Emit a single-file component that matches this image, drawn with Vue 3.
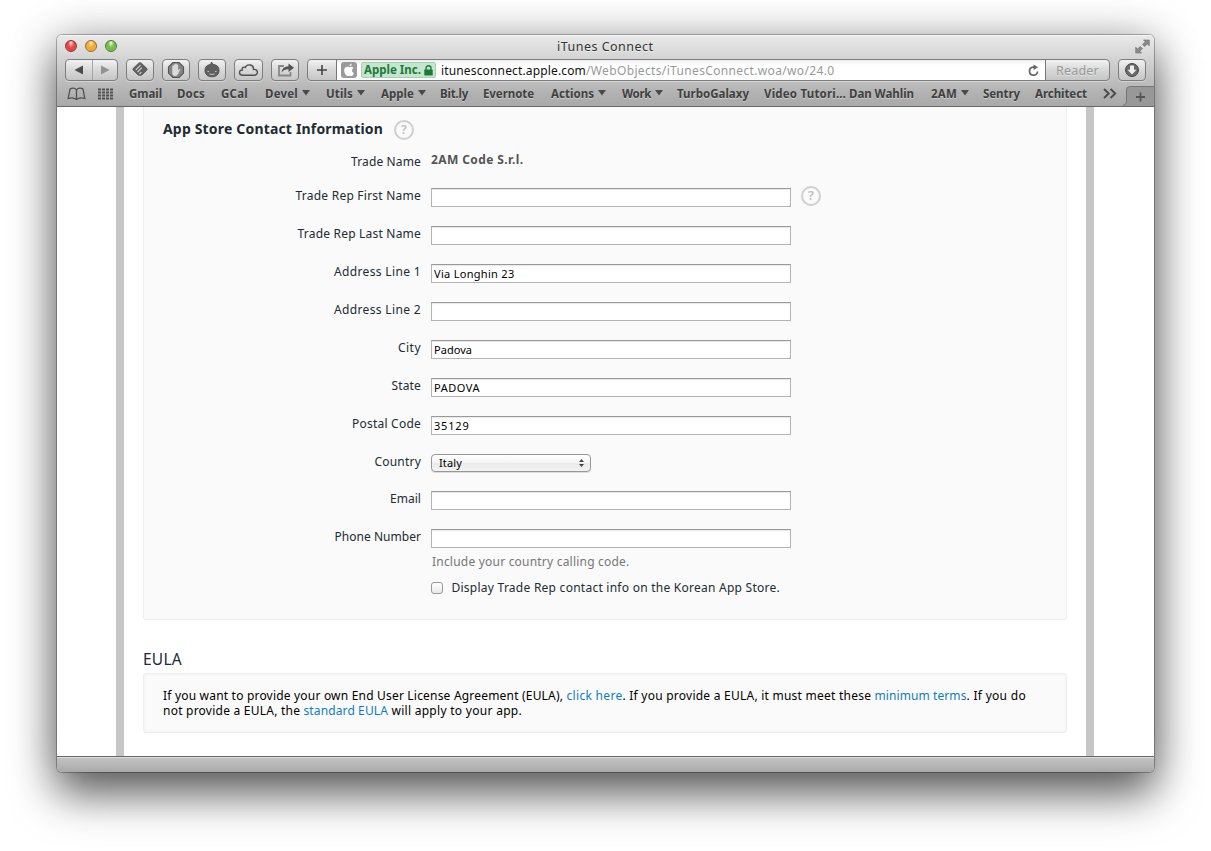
<script setup>
const vFit = {
  mounted(el, { value }) {
    const apply = () => {
      el.style.letterSpacing = '0px'
      const natural = el.getBoundingClientRect().width
      el.style.letterSpacing = (value - natural) / el.textContent.length + 'px'
    }
    apply()
    document.fonts.ready.then(apply)
  },
}

const bookmarks = [
  { name: 'Gmail', width: 33, slot: 48 },
  { name: 'Docs', width: 28, slot: 44 },
  { name: 'GCal', width: 27, slot: 44 },
  { name: 'Devel', width: 33, slot: 61, menu: true },
  { name: 'Utils', width: 27, slot: 55, menu: true },
  { name: 'Apple', width: 33, slot: 59, menu: true },
  { name: 'Bit.ly', width: 28, slot: 43 },
  { name: 'Evernote', width: 51, slot: 68 },
  { name: 'Actions', width: 43, slot: 71, menu: true },
  { name: 'Work', width: 29, slot: 55, menu: true },
  { name: 'TurboGalaxy', width: 72, slot: 87 },
  { name: 'Video Tutori…', width: 82, slot: 85 },
  { name: 'Dan Wahlin', width: 65, slot: 82 },
  { name: '2AM', width: 26, slot: 52, menu: true },
  { name: 'Sentry', width: 37, slot: 52 },
  { name: 'Architect', width: 52, slot: 68 },
]

const fields = [
  { label: 'Trade Rep First Name', width: 125.5, help: true },
  { label: 'Trade Rep Last Name', width: 123.5 },
  { label: 'Address Line 1', width: 87, value: 'Via Longhin 23', valueWidth: 80.5 },
  { label: 'Address Line 2', width: 87 },
  { label: 'City', width: 23, value: 'Padova', valueWidth: 38 },
  { label: 'State', width: 29.5, value: 'PADOVA', valueWidth: 46 },
  { label: 'Postal Code', width: 69, value: '35129', valueWidth: 35.5 },
  { label: 'Country', width: 46.5, select: 'Italy', valueWidth: 23 },
  { label: 'Email', width: 31 },
  { label: 'Phone Number', width: 86.5 },
]
</script>

<template>
  <div class="desktop">
    <div class="window">
      <header class="chrome">
        <div class="titlebar">
          <div class="lights"><i class="red"></i><i class="amber"></i><i class="green"></i></div>
          <h1><span v-fit="96.500">iTunes Connect</span></h1>
          <svg class="fullscreen" width="15" height="15" viewBox="0 0 15 15" fill="#8a8a8a" stroke="#6c6c6c" stroke-width=".6">
            <path d="M8.500 1h5.800v5.800l-1.900-1.900-2.700 2.700-2.200-2.200 2.700-2.700zM6.500 14H.7V8.200l1.900 1.900 2.700-2.700 2.200 2.200-2.700 2.700z" />
          </svg>
        </div>

        <div class="toolbar">
          <div class="btn nav">
            <svg width="52" height="20" viewBox="0 0 52 20">
              <path d="M17 5.500v9L8.500 10z" fill="#4c4c4c" />
              <path d="M26.500 0v20" stroke="#a5a5a5" />
              <path d="M35 5.500v9l8.500-4.500z" fill="#929292" />
            </svg>
          </div>
          <div class="btn">
            <svg width="26" height="20" viewBox="0 0 26 20">
              <path d="M13 2.700q.9 0 1.600.7l5.100 4.900q.9.900 0 1.900l-4.300 4.400q-.7.700-1.500.7h-1.800q-.8 0-1.500-.7l-4.300-4.400q-.9-1 0-1.900l5.100-4.900q.7-.7 1.600-.7z" fill="#626262" stroke="#4c4c4c" stroke-width=".8" />
              <path d="M8.800 9.800l4.700-4.700M10.500 12l4.300-4.300M12.500 14l1.800-1.800" stroke="#cfcfcf" stroke-width="1.200" />
            </svg>
          </div>
          <div class="btn">
            <svg width="26" height="20" viewBox="0 0 26 20">
              <path d="M9.900 2.500h6.200L20.500 6.900v6.200L16.100 17.500H9.900L5.500 13.100V6.900z" fill="#858585" stroke="#555" stroke-width="1.200" />
              <path d="M9.300 10V6q.7-.9 1.400 0V4.800q.8-1 1.500 0V4q.8-.9 1.500 0v.8q.8-.8 1.400 0V10.500l1-1.300q1-.6 1.200.4L15 14q-.9 1.900-2.800 1.900-2.900 0-2.900-3z" fill="#dadada" />
            </svg>
          </div>
          <div class="btn">
            <svg width="26" height="20" viewBox="0 0 26 20">
              <path d="M12.500 2q.6 1.800 2.300 2.600c3.300.4 5.200 2.400 5.200 5.400 0 .8-.1 1.300 0 2-1 3.400-3.500 4.800-7 4.800S7 15.400 6 12c.1-.7 0-1.200 0-2 0-3 1.800-4.900 5-5.400q1.200-1 1.500-2.600z" fill="#606060" stroke="#484848" stroke-width=".8" />
              <path d="M8.500 11.500H10M16 11.500h1.500M10.500 14q2.500 1 5 0" stroke="#c4c4c4" fill="none" />
            </svg>
          </div>
          <div class="btn cloud">
            <svg width="27" height="20" viewBox="0 0 27 20">
              <path d="M8 15.300C3.300 15.300 3.700 10 7.200 10 6.700 7.300 9 6.600 10.300 7.500c1.900-4.200 8.600-3 8.200 1.900 5.200-.5 5.200 5.900.5 5.900z" fill="none" stroke="#505050" stroke-width="1.400" />
            </svg>
          </div>
          <div class="btn">
            <svg width="26" height="20" viewBox="0 0 26 20">
              <path d="M12 6H7v9.500h11.500V12" fill="none" stroke="#888" stroke-width="1.800" />
              <path d="M9.500 12.500q.5-6 7-6.300V3.500L22 7.700l-5.500 4.200V9.200q-4-.3-7 3.300z" fill="#555" />
            </svg>
          </div>
          <div class="address">
            <div class="add">
              <svg width="29" height="20" viewBox="0 0 29 20"><path d="M9 10h10M14 5v10" stroke="#444" stroke-width="1.600" /></svg>
            </div>
            <div class="url">
              <svg class="favicon" width="16" height="16" viewBox="0 0 16 16">
                <rect width="16" height="16" rx="3" fill="#9a9a9a" />
                <path d="M10.800 1.500q.2 2.200-2.400 3 0-2.300 2.400-3zM8.300 5.200c1-.6 3-1 4.200.7-2.300 1.500-1.600 4.300.5 5-.9 2.200-1.900 3.600-3.200 3.100-1.100-.5-1.500-.4-2.400 0C5.500 14.600 3 11 3.200 8 3.400 5 6 4 8.300 5.200z" fill="#fff" />
              </svg>
              <div class="badge">
                <b v-fit="57">Apple Inc.</b>
                <svg width="9" height="11" viewBox="0 0 9 11"><path d="M2 5V3.300a2.500 2.500 0 0 1 5 0V5" fill="none" stroke="#1c7a3d" stroke-width="1.400" /><rect x=".3" y="4.600" width="8.400" height="6" rx=".7" fill="#1c7a3d" /></svg>
              </div>
              <span v-fit="145" class="host">itunesconnect.apple.com</span>
              <span v-fit="248.500" class="path">/WebObjects/iTunesConnect.woa/wo/24.0</span>
              <svg class="reload" width="13" height="13" viewBox="0 0 13 13"><path d="M8 3.200H6A4 4 0 1 0 10.500 7.500" fill="none" stroke="#666" stroke-width="1.700" /><path d="M6.500.5l4.600 2.700-4.600 2.900z" fill="#666" /></svg>
            </div>
            <div class="reader"><span v-fit="43">Reader</span></div>
          </div>
          <div class="btn download">
            <svg width="26" height="20" viewBox="0 0 26 20"><circle cx="13" cy="10" r="6.500" fill="#6a6a6a" stroke="#484848" /><path d="M11 5.500h4V9.800h2.500L13 14.500 8.500 9.800H11z" fill="#eee" /></svg>
          </div>
        </div>

        <nav class="bookmarks">
          <svg class="book" width="19" height="14" viewBox="0 0 19 14"><path d="M9.500 12.500V3Q8.500 1.200 6 1.200q-2 0-3 .8L1.200 11.500Q6 9.800 9.500 12.500q3.500-2.700 8.300-1L16 2q-1-.8-3-.8-2.500 0-3.500 1.800" fill="none" stroke="#505050" stroke-width="1.300" /></svg>
          <svg class="sites" width="15" height="12" viewBox="0 0 15 12"><path d="M0 1.500h15M0 4.500h15M0 7.500h15M0 10.500h15" stroke="#505050" stroke-width="2" stroke-dasharray="3 1" /></svg>
          <div v-for="item in bookmarks" :key="item.name" class="bookmark" :style="{ width: item.slot + 'px' }">
            <b v-fit="item.width">{{ item.name }}</b>
            <svg v-if="item.menu" width="8" height="6" viewBox="0 0 8 6"><path d="M0 0h8L4 5.600z" fill="#4a4a4a" /></svg>
          </div>
          <svg class="more" width="14" height="12" viewBox="0 0 14 12"><path d="M1 1l4.700 4.500L1 10M7.500 1l4.700 4.500L7.500 10" fill="none" stroke="#4c4c4c" stroke-width="2" /></svg>
          <svg class="newtab" width="31" height="20" viewBox="0 0 31 20"><path d="M0 20Q3.500 19 3.500 15V4Q3.500.5 7 .5H31V20z" fill="#989898" /><path d="M0 19.500Q3.500 19 3.500 15V4Q3.500.5 7 .5H31" fill="none" stroke="#777" /><path d="M13 11h9M17.500 6.500v9" stroke="#555" stroke-width="1.800" /></svg>
        </nav>
      </header>

      <main class="viewport">
        <div class="sheet">
          <section class="card contact">
            <h2><span v-fit="220">App Store Contact Information</span><span class="help">?</span></h2>
            <div class="row trade">
              <label><span v-fit="70">Trade Name</span></label>
              <b v-fit="92.500">2AM Code S.r.l.</b>
            </div>
            <div v-for="field in fields" :key="field.label" class="row" :class="{ country: field.select }">
              <label><span v-fit="field.width">{{ field.label }}</span></label>
              <div v-if="field.select" class="select">
                <span v-fit="field.valueWidth">{{ field.select }}</span>
                <svg width="5" height="8" viewBox="0 0 5 8" fill="#444"><path d="M0 3l2.500-3L5 3zM0 5l2.500 3L5 5z" /></svg>
              </div>
              <div v-else class="input"><span v-if="field.value" v-fit="field.valueWidth">{{ field.value }}</span></div>
              <span v-if="field.help" class="help">?</span>
            </div>
            <p class="hint"><span v-fit="197.500">Include your country calling code.</span></p>
            <div class="check"><i></i><span v-fit="328.500">Display Trade Rep contact info on the Korean App Store.</span></div>
          </section>

          <h3><span v-fit="39">EULA</span></h3>
          <section class="card eula">
            <p><span v-fit="403.500">If you want to provide your own End User License Agreement (EULA),&nbsp;</span><a v-fit="56">click here</a><span v-fit="252">. If you provide a EULA, it must meet these&nbsp;</span><a v-fit="92">minimum terms</a><span v-fit="59.500">. If you do</span></p>
            <p><span v-fit="140.500">not provide a EULA, the&nbsp;</span><a v-fit="84.500">standard EULA</a><span v-fit="134">&nbsp;will apply to your app.</span></p>
          </section>
        </div>
      </main>
      <footer class="status"></footer>
    </div>
  </div>
</template>

<style>
body { background: #fff; overflow: hidden; }
</style>

<style scoped>
* { box-sizing: border-box; }
.desktop {
  width: 1211px;
  height: 851px;
  padding: 35px 57px 0;
  font-family: "Noto Sans", "Open Sans", sans-serif;
  font-size: 12px;
  color: #222b33;
  overflow: hidden;
}
span, b, a { white-space: pre; }
svg { display: block; flex: none; }
.window {
  width: 1097px;
  height: 737px;
  display: flex;
  flex-direction: column;
  border-radius: 5px;
  overflow: hidden;
  background: #fff;
  box-shadow: 0 0 0 1px rgba(0, 0, 0, .27), 0 23px 44px rgba(0, 0, 0, .56), 0 2px 46px rgba(0, 0, 0, .28);
}
.chrome {
  height: 72px;
  flex: none;
  background: linear-gradient(#eaeaea 0, #d9d9d9 18px, #c2c2c2 42px, #b0b0b0 60px, #a9a9a9);
  border-bottom: 1px solid #686868;
  box-shadow: inset 0 1px #f6f6f6;
}
.titlebar { height: 24px; position: relative; display: flex; align-items: center; padding-left: 8px; }
.lights { display: flex; gap: 8px; }
.lights i { width: 12px; height: 12px; border-radius: 50%; border: 1px solid; margin-top: -2px; }
.red { background: radial-gradient(ellipse at 50% 20%, #ffdcdc 0, #ee5858 35%, #e33b3b 60%, #ff9c92); border-color: #8c3030 !important; }
.amber { background: radial-gradient(ellipse at 50% 20%, #fff1cf 0, #f0b23e 35%, #eea72d 60%, #ffe78a); border-color: #986325 !important; }
.green { background: radial-gradient(ellipse at 50% 20%, #edffdc 0, #85c65b 35%, #70b548 60%, #c5f793); border-color: #467630 !important; }
.titlebar h1 { position: absolute; left: 500px; top: 3px; margin: 0; font-size: 12.5px; font-weight: 400; line-height: 18px; color: #333; text-shadow: 0 1px #eee; }
.fullscreen { margin: -2px 4px 0 auto; }
.toolbar { display: flex; padding-left: 8px; gap: 8px; height: 22px; }
.btn, .address {
  height: 22px;
  border: 1px solid #7d7d7d;
  border-radius: 4px;
  background: linear-gradient(#f2f2f2, #d8d8d8 50%, #c6c6c6);
  box-shadow: 0 1px rgba(255, 255, 255, .35);
  flex: none;
}
.btn { width: 28px; }
.nav { width: 53px; }
.cloud { width: 29px; }
.address { width: 803px; display: flex; overflow: hidden; }
.add { width: 29px; border-right: 1px solid #777; }
.url { width: 709px; background: linear-gradient(#eee, #fff 5px); display: flex; align-items: center; padding-left: 4px; border-right: 1px solid #777; line-height: 18px; }
.badge { width: 75px; height: 16px; margin-left: 4px; border: 1px solid #a4d2b0; border-radius: 2px; background: #c5e5cd; color: #1c7a3d; display: flex; align-items: center; padding-left: 2px; gap: 3px; font-size: 11.5px; }
.host { margin: 2px 0 0 5px; color: #111; }
.path { margin-top: 2px; color: #999; }
.reload { margin: 0 5px 0 auto; }
.reader { flex: 1; color: #999; font-size: 12.5px; line-height: 21px; padding-left: 10px; text-shadow: 0 1px #e4e4e4; }
.bookmarks { height: 25px; display: flex; align-items: center; color: #404040; font-size: 11.500px; text-shadow: 0 1px rgba(255, 255, 255, .4); }
.book { margin-left: 10px; }
.sites { margin: 0 15px 0 12px; padding-right: 0; }
.sites + .bookmark { margin-left: 1px; }
.bookmark { display: flex; align-items: center; flex: none; line-height: 16px; padding-top: 1px; }
.bookmark svg { margin: -3px 0 0 4px; }
.more { margin-right: 7px; margin-top: 1px; }
.newtab { margin-top: 5px; margin-left: -1px; }
.viewport { height: 649px; flex: none; overflow: hidden; }
.sheet { width: 978px; height: 649px; margin-left: 59px; border: solid #c6c6c6; border-width: 0 8px; padding: 0 19px; }
.card { background: #fafafa; border: 1px solid #eee; border-radius: 3px; box-shadow: inset 0 0 3px #eee; }
.contact { height: 513px; border-top: 0; border-radius: 0 0 3px 3px; padding: 13px 0 0 19px; box-shadow: none; }
h2 { margin: 0; height: 20px; display: flex; font-size: 14px; line-height: 18px; color: #222b33; }
.help { width: 20px; height: 20px; flex: none; border: 2px solid #cdcfd0; border-radius: 50%; font: 600 12.5px/16px "Noto Sans", sans-serif; text-align: center; color: #bfc1c2; margin-left: 11px; }
.row { display: flex; height: 38px; }
.row label { width: 258px; text-align: right; line-height: 18px; flex: none; margin-right: 10px; padding-top: 0; display: block; }
.trade { height: 34px; padding-top: 11px; margin-bottom: 13px; }
.trade label { padding-top: 2px; }
.trade b { color: #555; line-height: 18px; }
.input { width: 360px; height: 19px; flex: none; margin-top: 1px; border: 1px solid #b3b3b3; border-top-color: #999; background: #fff; box-shadow: inset 0 1px 1px #e8e8e8; font-size: 11px; line-height: 18px; padding-left: 2px; color: #000; }
.row .help { margin-left: 10px; margin-top: -1px; }
.country { height: 37px; }
.select { width: 160px; height: 18px; margin-top: 1px; border: 1px solid #979797; border-radius: 4px; background: linear-gradient(#fff, #f4f4f4 50%, #eaeaea 51%, #f3f3f3); font-size: 11px; line-height: 15px; color: #000; display: flex; align-items: center; justify-content: space-between; padding: 0 6px 0 7px; box-shadow: 0 1px #ddd; }
.select span { margin-top: -1px; }
.hint { margin: -13px 0 0 269px; line-height: 18px; color: #777; }
.check { display: flex; align-items: center; margin: 8px 0 0 268px; line-height: 18px; }
.check i { width: 12px; height: 12px; border: 1px solid #999; border-radius: 3px; margin-right: 8.5px; background: linear-gradient(#fff, #e9e9e9); }
h3 { margin: 28px 0 0; height: 26px; font-size: 15.500px; font-weight: 400; line-height: 22px; }
.eula { height: 60px; margin-top: -1px; padding: 14px 0 0 19px; color: #000; }
.eula p { margin: 0; height: 15px; line-height: 15px; display: flex; }
.eula a { color: #0f7dc2; }
.status { height: 16px; flex: none; background: linear-gradient(#c4c4c4, #a9a9a9); border-top: 1px solid #666; box-shadow: inset 0 1px #ddd; }
</style>
